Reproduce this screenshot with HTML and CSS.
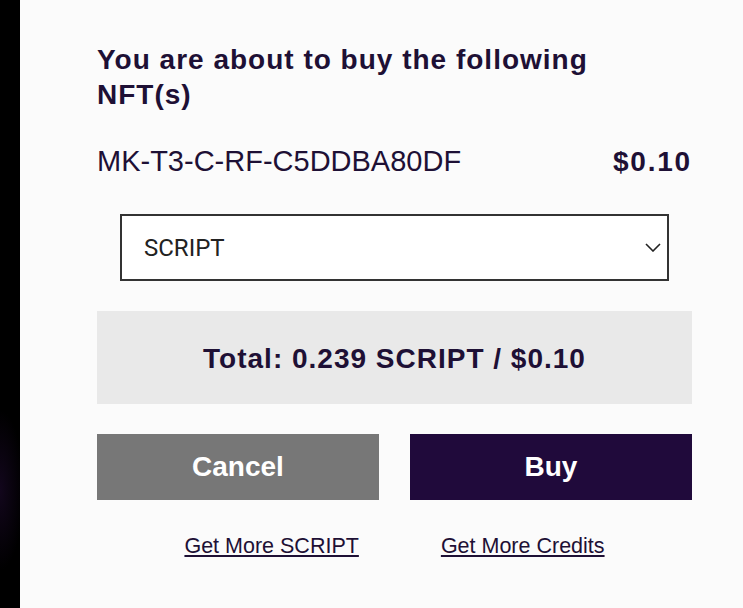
FILE: index.html
```html
<!DOCTYPE html>
<html lang="en">
<head>
  <meta charset="UTF-8">
  <meta name="viewport" content="width=device-width, initial-scale=1.0">
  <title>Buy NFT</title>
  <link rel="stylesheet" href="styles.css">
</head>
<body>

  <div class="page">
    <div class="side"></div>

    <div class="panel">
      <h1>You are about to buy the following NFT(s)</h1>

      <div class="item">
        <span class="item-name">MK-T3-C-RF-C5DDBA80DF</span>
        <span class="item-price">$0.10</span>
      </div>

      <div class="select-wrap">
        <select id="currency">
          <option>SCRIPT</option>
          <option>Credits</option>
        </select>
        <svg class="chevron" width="16" height="9" viewBox="0 0 16 9">
          <path d="M1 1 L8 8 L15 1" fill="none" stroke="#222" stroke-width="1.6"/>
        </svg>
      </div>

      <div class="total">Total: 0.239 SCRIPT / $0.10</div>

      <div class="actions">
        <button class="btn btn-cancel">Cancel</button>
        <button class="btn btn-buy">Buy</button>
      </div>

      <div class="links">
        <a href="#">Get More SCRIPT</a>
        <a href="#">Get More Credits</a>
      </div>
    </div>
  </div>

</body>
</html>
```

FILE: styles.css
```css
* {
  margin: 0;
  padding: 0;
  box-sizing: border-box;
}

body {
  font-family: "Liberation Sans", Arial, sans-serif;
  background-color: #000;
  color: #1e1035;
  overflow: hidden;
}

.page {
  display: flex;
  height: 608px;
}

.side {
  width: 20px;
  flex-shrink: 0;
  background: radial-gradient(ellipse 24px 80px at 0 490px, #12061c, #000);
}

.panel {
  flex: 1;
  background-color: #fbfbfb;
  padding: 42px 51px 0 77px;
}

h1 {
  max-width: 520px;
  font-size: 28px;
  line-height: 35px;
  letter-spacing: 1px;
  font-weight: bold;
  color: #1e1035;
}

.item {
  display: flex;
  justify-content: space-between;
  margin-top: 32px;
  font-size: 29px;
  line-height: 35px;
}

.item-price {
  font-size: 28px;
  font-weight: bold;
  letter-spacing: 1.8px;
}

.select-wrap {
  position: relative;
  margin: 35px 23px 0;
}

.select-wrap select {
  appearance: none;
  -webkit-appearance: none;
  width: 100%;
  height: 67px;
  padding: 0 40px 0 22px;
  border: 2px solid #333;
  border-radius: 0;
  background-color: #fff;
  font-family: Roboto, sans-serif;
  font-size: 24px;
  color: #222;
  outline: none;
}

.chevron {
  position: absolute;
  right: 8px;
  top: 29px;
  pointer-events: none;
}

.total {
  margin-top: 30px;
  height: 93px;
  padding-top: 3px;
  background-color: #e9e9e9;
  display: flex;
  justify-content: center;
  align-items: center;
  font-size: 28px;
  font-weight: bold;
  letter-spacing: 1px;
}

.actions {
  display: flex;
  gap: 31px;
  margin-top: 30px;
}

.btn {
  flex: 1;
  height: 66px;
  border: none;
  font-family: "Liberation Sans", Arial, sans-serif;
  font-size: 28px;
  font-weight: bold;
  color: #fff;
  cursor: pointer;
}

.btn-cancel {
  background-color: #777;
}

.btn-buy {
  background-color: #200a3b;
}

.links {
  display: flex;
  justify-content: center;
  gap: 82px;
  margin-top: 34px;
}

.links a {
  font-size: 21.5px;
  line-height: 24px;
  color: #1e1035;
  text-decoration: underline;
}
```
